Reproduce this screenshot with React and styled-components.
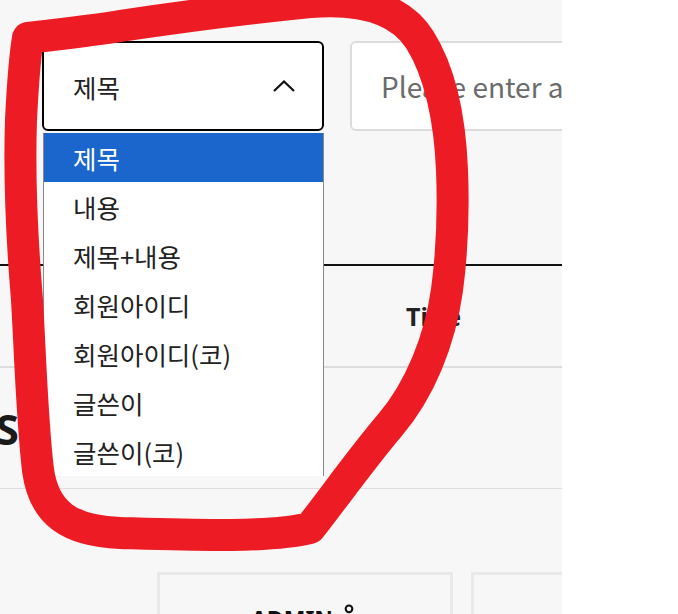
import styled, { createGlobalStyle } from "styled-components";
import { User } from "lucide-react";

const GlobalStyle = createGlobalStyle`
  html, body {
    margin: 0;
    padding: 0;
    background: #ffffff;
  }
  body {
    font-family: "Noto Sans CJK KR", "Noto Sans", sans-serif;
    color: #222;
  }
`;

const Page = styled.div`
  position: relative;
  width: 562px;
  height: 614px;
  background: #f7f7f7;
  overflow: hidden;
`;

const SearchBar = styled.div`
  display: flex;
  gap: 26px;
  padding: 41px 0 0 42px;
`;

const SelectWrap = styled.div`
  position: relative;
  flex: none;
`;

const SelectBox = styled.div`
  box-sizing: border-box;
  width: 282px;
  height: 90px;
  display: flex;
  align-items: center;
  justify-content: space-between;
  padding: 0 26px 0 29px;
  background: #fff;
  border: 2px solid #000;
  border-radius: 6px;
  font-size: 25.5px;
  color: #222;
`;

const Options = styled.ul`
  position: absolute;
  top: 92px;
  left: 1px;
  width: 281px;
  margin: 0;
  padding: 0;
  list-style: none;
  background: #fff;
  border-left: 1px solid #8a8a8a;
  border-right: 1px solid #8a8a8a;
  box-sizing: border-box;
  z-index: 2;
`;

const Option = styled.li`
  height: 49px;
  line-height: 49px;
  padding-left: 29px;
  font-size: 25.5px;
  color: ${(p) => (p.$active ? "#fff" : "#222")};
  background: ${(p) => (p.$active ? "#1a66cc" : "transparent")};
`;

const SearchInput = styled.input`
  box-sizing: border-box;
  flex: none;
  width: 300px;
  height: 90px;
  padding: 0 0 0 29px;
  background: #fff;
  border: 2px solid #dcdcdc;
  border-radius: 6px;
  font-family: "Noto Sans CJK KR", "Noto Sans", sans-serif;
  font-size: 28px;
  outline: none;
  &::placeholder {
    color: #6b6b6b;
  }
`;

const Table = styled.div`
  margin-top: 133px;
  border-top: 2px solid #111;
`;

const HeaderRow = styled.div`
  display: grid;
  grid-template-columns: 406px 1fr;
  align-items: center;
  height: 100px;
  border-bottom: 2px solid #dddddd;
`;

const HeaderCell = styled.div`
  font-family: "Noto Sans", sans-serif;
  font-size: 25px;
  font-weight: 700;
  color: #222;
`;

const BodyRow = styled.div`
  display: flex;
  align-items: center;
  height: 120px;
  border-bottom: 1px solid #dddddd;
`;

const RowHeading = styled.div`
  margin-left: -44px;
  font-family: "Noto Sans", sans-serif;
  font-size: 42px;
  font-weight: 700;
  color: #1a1a1a;
`;

const Cards = styled.div`
  display: flex;
  gap: 18px;
  padding: 83px 0 0 157px;
`;

const Card = styled.div`
  box-sizing: border-box;
  flex: none;
  width: 296px;
  height: 160px;
  display: flex;
  justify-content: center;
  padding-top: 28px;
  border: 3px solid #e9e9e9;
`;

const CardTitle = styled.div`
  display: flex;
  align-items: flex-start;
  gap: 6px;
  font-family: "Noto Sans", sans-serif;
  font-size: 23px;
  font-weight: 700;
  color: #111;
`;

const Annotation = styled.svg`
  position: absolute;
  left: 0;
  top: 0;
  pointer-events: none;
  z-index: 5;
`;

const options = ["제목", "내용", "제목+내용", "회원아이디", "회원아이디(코)", "글쓴이", "글쓴이(코)"];

export default function App() {
  return (
    <>
      <GlobalStyle />
      <Page>
        <SearchBar>
          <SelectWrap>
            <SelectBox>
              <span>제목</span>
              <svg width="24" height="14" viewBox="0 0 24 14">
                <path d="M2 12 L12 2.5 L22 12" fill="none" stroke="#111" strokeWidth="2.2" />
              </svg>
            </SelectBox>
            <Options>
              {options.map((o, i) => (
                <Option key={o} $active={i === 0}>
                  {o}
                </Option>
              ))}
            </Options>
          </SelectWrap>
          <SearchInput placeholder="Please enter a keyword" />
        </SearchBar>

        <Table>
          <HeaderRow>
            <span />
            <HeaderCell>Title</HeaderCell>
          </HeaderRow>
          <BodyRow>
            <RowHeading>LIST</RowHeading>
          </BodyRow>
        </Table>

        <Cards>
          <Card>
            <CardTitle>
              ADMIN <User size={20} strokeWidth={2.5} />
            </CardTitle>
          </Card>
          <Card>
            <CardTitle>MEMBER</CardTitle>
          </Card>
        </Cards>
      </Page>

      <Annotation width="678" height="614" viewBox="0 0 678 614">
        <path
          d="M28 38
             C60 34 90 31 120 26
             C180 17 250 8 310 2
             C360 -2 400 8 420 40
             C440 72 450 120 452 170
             C454 220 451 260 447 290
             C440 340 420 390 390 425
             C362 458 338 492 310 528
             C270 538 190 535 120 533
             C70 531 44 514 38 470
             C32 420 30 350 27 300
             C22 240 19 180 21 120
             C23 80 25 55 28 38"
          fill="none"
          stroke="#ed1c24"
          strokeWidth="32"
          strokeLinecap="round"
          strokeLinejoin="round"
        />
      </Annotation>
    </>
  );
}
